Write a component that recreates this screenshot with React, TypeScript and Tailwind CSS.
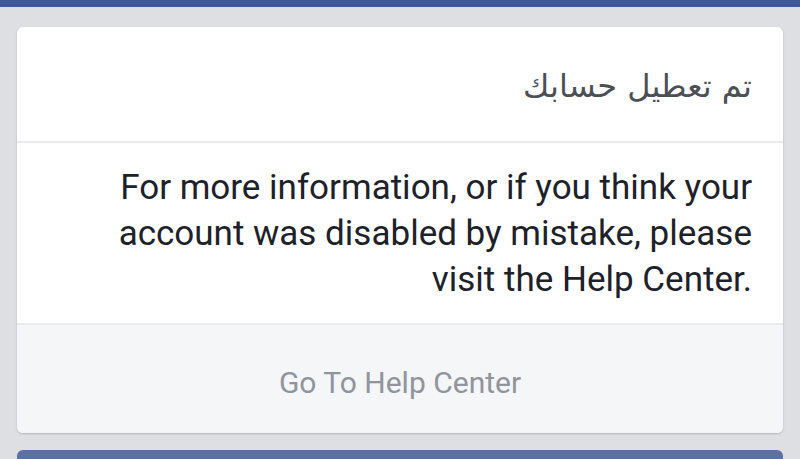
export default function App() {
  return (
    <div className="h-[459px] bg-[#dddfe2] font-['Roboto',sans-serif] overflow-hidden">
      <div className="h-[7px] bg-[#3b5998]" />
      <div className="px-[17px] pt-[20px]">
        <div className="rounded-[6px] bg-white shadow-[0_1px_2px_rgba(0,0,0,0.2)] overflow-hidden">
          <div className="h-[116px] flex items-center justify-end px-[31px] pt-[4px] border-b-2 border-[#e9ebee]">
            <h1 dir="rtl" className="text-[32px] text-[#4b4f56] font-['DejaVu_Sans',sans-serif]">
              تم تعطيل حسابك
            </h1>
          </div>
          <div className="pt-[22px] pb-[20px] pl-[40px] pr-[31px]">
            <p className="text-right text-[35px] leading-[46px] text-[#1d2129]">
              For more information, or if you think your
              <br />
              account was disabled by mistake, please
              <br />
              visit the Help Center.
            </p>
          </div>
          <div className="h-[110px] flex items-center justify-center pt-[6px] bg-[#f5f6f7] border-t-2 border-[#e9ebee]">
            <span className="text-[30px] text-[#90949c]">Go To Help Center</span>
          </div>
        </div>
        <div className="mt-[17px] h-[40px] rounded-[6px] bg-[#5b71a6]" />
      </div>
    </div>
  )
}
